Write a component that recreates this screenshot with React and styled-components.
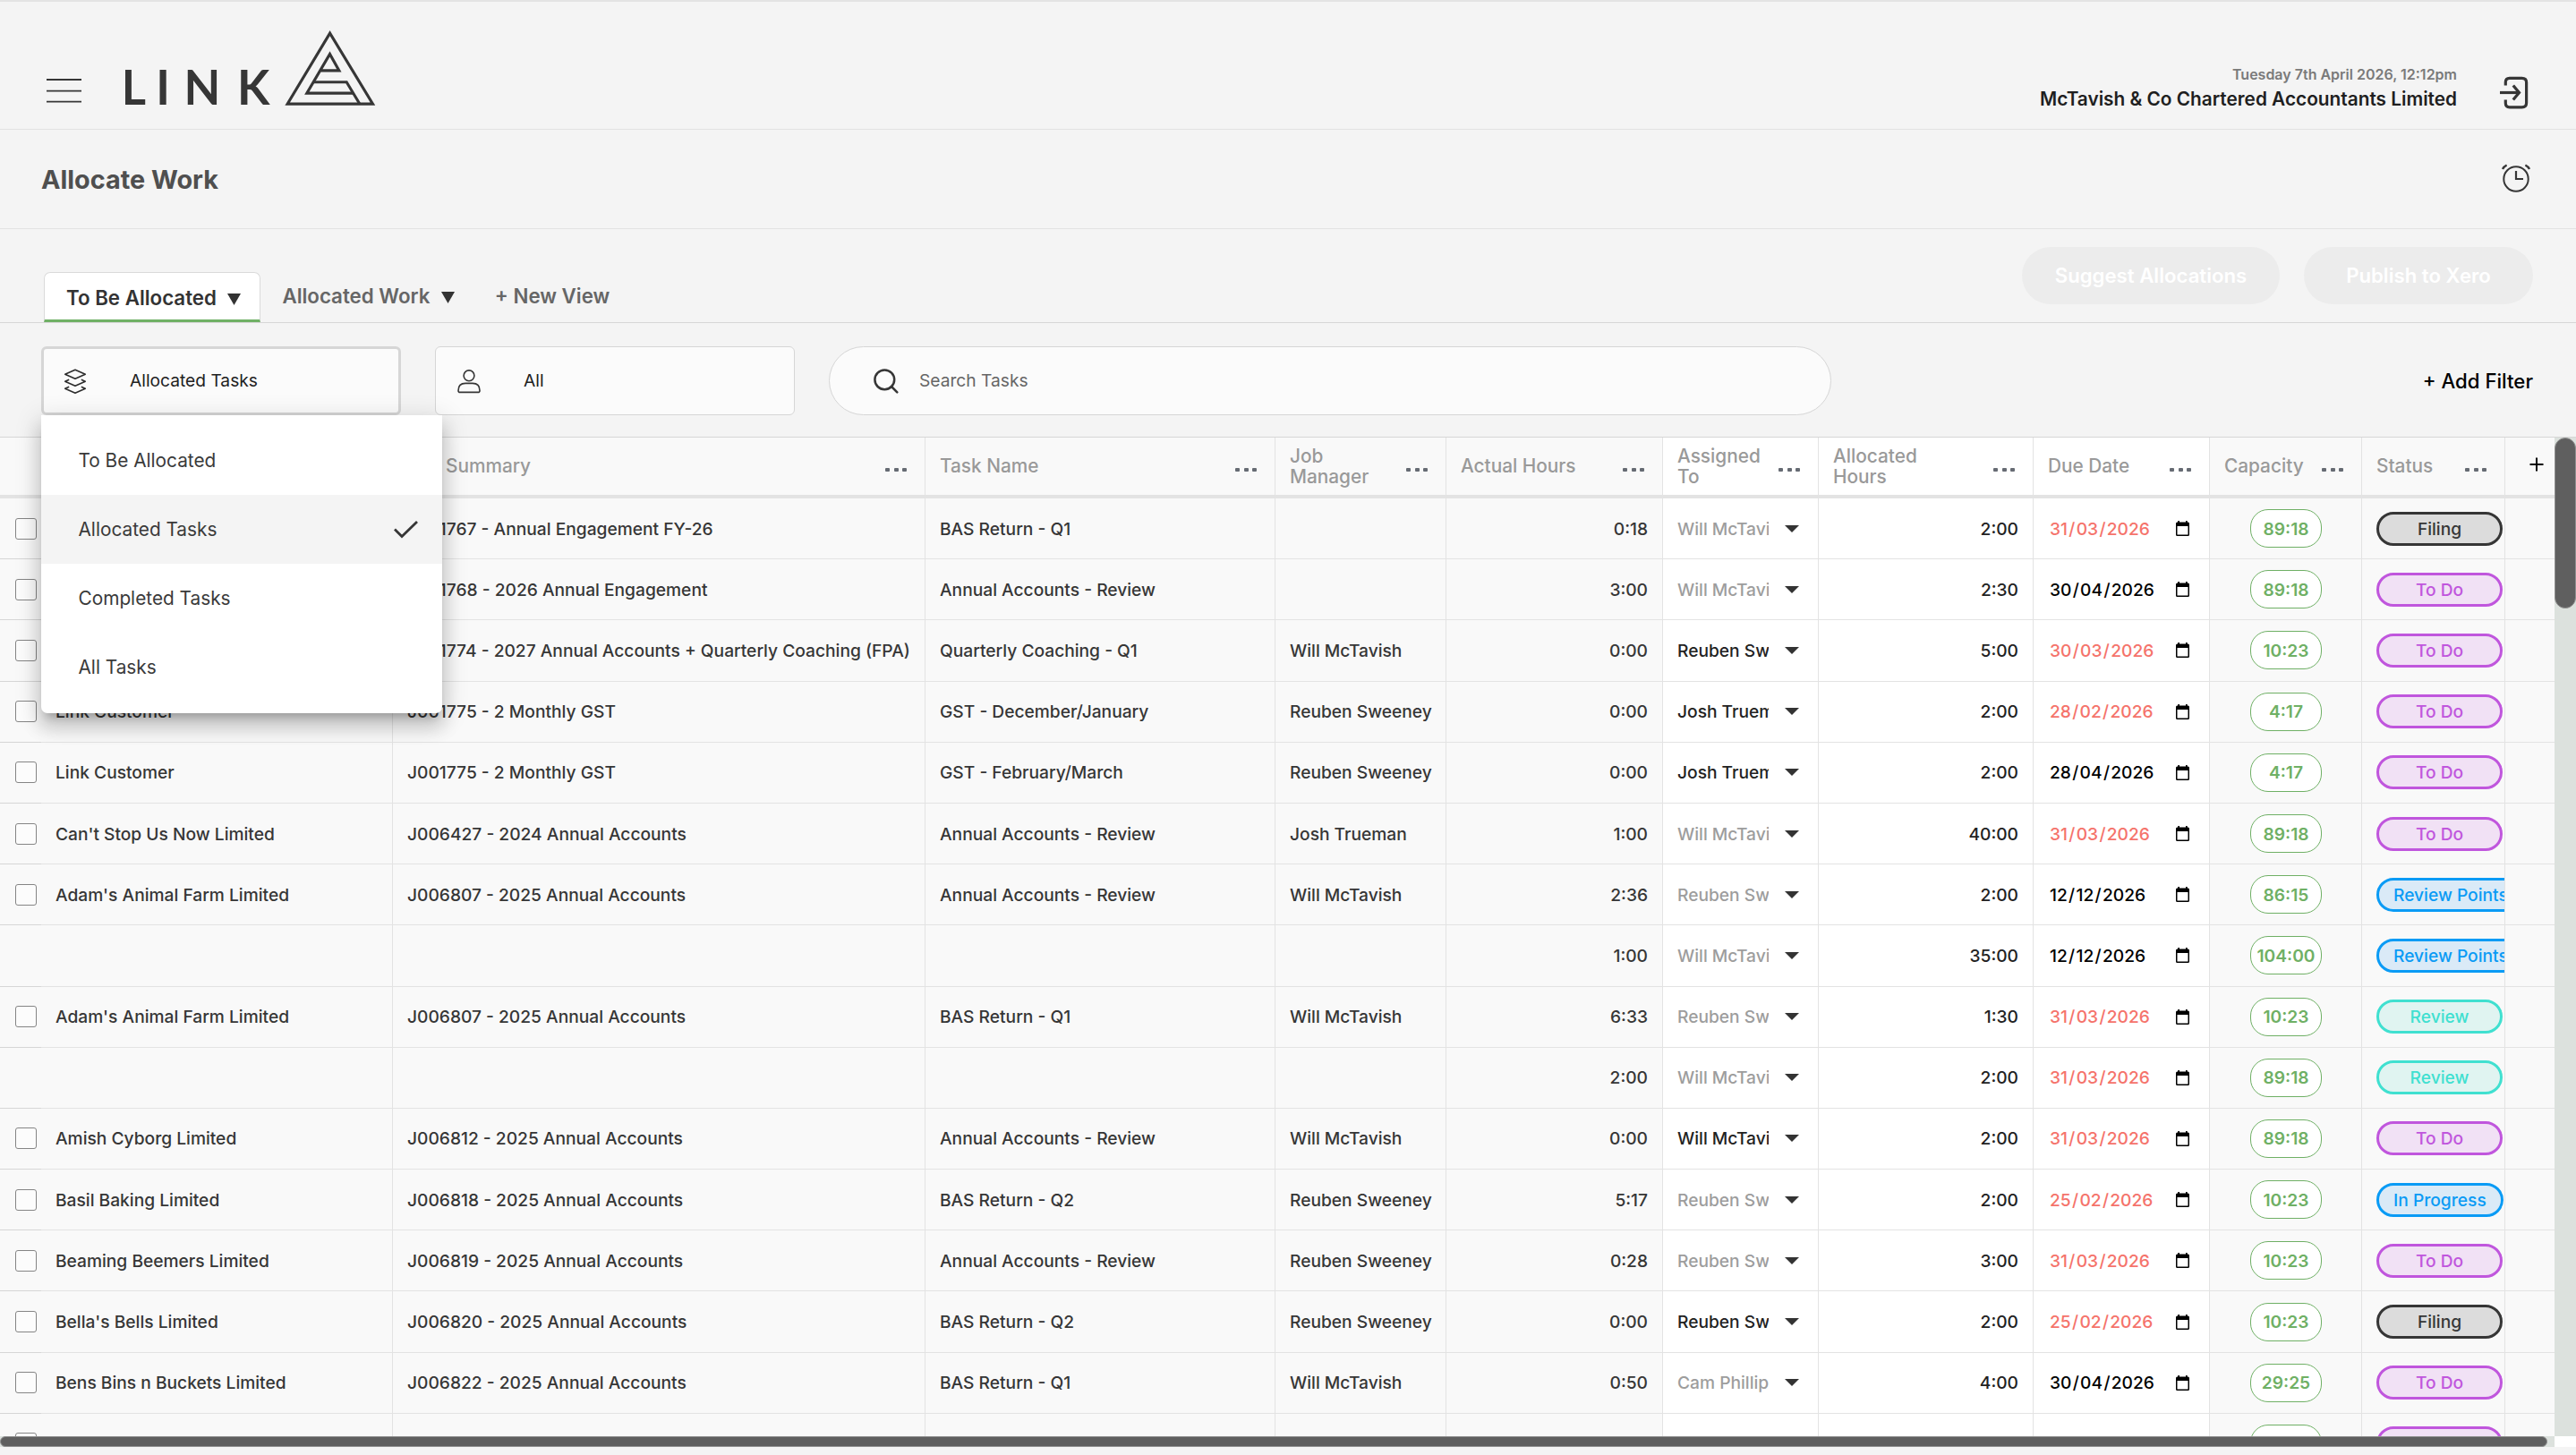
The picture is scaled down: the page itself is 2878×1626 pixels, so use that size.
import React from 'react';
import styled, { createGlobalStyle } from 'styled-components';

const columns = '46px 393px 595px 391px 191px 242px 174px 240px 197px 170px 160px 55px';

const statuses = {
    'Filing': { color: '#363636', fill: '#dcdcdc' },
    'To Do': { color: '#c056dd', fill: '#f1e1f5' },
    'Review Points': { color: '#0a9bf5', fill: '#daeaf7' },
    'In Progress': { color: '#0a9bf5', fill: '#daeaf7' },
    'Review': { color: '#40e0d0', fill: '#e0f4f1' },
}

const headings = [
    { title: '', menu: false },
    { title: '', menu: false },
    { title: 'Summary', menu: true, indent: 43 },
    { title: 'Task Name', menu: true },
    { title: 'Job Manager', menu: true, wrap: true },
    { title: 'Actual Hours', menu: true },
    { title: 'Assigned To', menu: true, wrap: true, editable: true },
    { title: 'Allocated Hours', menu: true, wrap: true, editable: true },
    { title: 'Due Date', menu: true, editable: true },
    { title: 'Capacity', menu: true },
    { title: 'Status', menu: true },
]

const tasks = [
    { id: 1, client: 'Link Customer', summary: 'J001767 - Annual Engagement FY-26', name: 'BAS Return - Q1', manager: '', actual: '0:18', assigned: 'Will McTavish', muted: true, hours: '2:00', due: '31/03/2026', late: true, capacity: '89:18', status: 'Filing' },
    { id: 2, client: 'Link Customer', summary: 'J001768 - 2026 Annual Engagement', name: 'Annual Accounts - Review', manager: '', actual: '3:00', assigned: 'Will McTavish', muted: true, hours: '2:30', due: '30/04/2026', late: false, capacity: '89:18', status: 'To Do' },
    { id: 3, client: 'Link Customer', summary: 'J001774 - 2027 Annual Accounts + Quarterly Coaching (FPA)', name: 'Quarterly Coaching - Q1', manager: 'Will McTavish', actual: '0:00', assigned: 'Reuben Sweeney', muted: false, hours: '5:00', due: '30/03/2026', late: true, capacity: '10:23', status: 'To Do' },
    { id: 4, client: 'Link Customer', summary: 'J001775 - 2 Monthly GST', name: 'GST - December/January', manager: 'Reuben Sweeney', actual: '0:00', assigned: 'Josh Trueman', muted: false, hours: '2:00', due: '28/02/2026', late: true, capacity: '4:17', status: 'To Do' },
    { id: 5, client: 'Link Customer', summary: 'J001775 - 2 Monthly GST', name: 'GST - February/March', manager: 'Reuben Sweeney', actual: '0:00', assigned: 'Josh Trueman', muted: false, hours: '2:00', due: '28/04/2026', late: false, capacity: '4:17', status: 'To Do' },
    { id: 6, client: "Can't Stop Us Now Limited", summary: 'J006427 - 2024 Annual Accounts', name: 'Annual Accounts - Review', manager: 'Josh Trueman', actual: '1:00', assigned: 'Will McTavish', muted: true, hours: '40:00', due: '31/03/2026', late: true, capacity: '89:18', status: 'To Do' },
    { id: 7, client: "Adam's Animal Farm Limited", summary: 'J006807 - 2025 Annual Accounts', name: 'Annual Accounts - Review', manager: 'Will McTavish', actual: '2:36', assigned: 'Reuben Sweeney', muted: true, hours: '2:00', due: '12/12/2026', late: false, capacity: '86:15', status: 'Review Points' },
    { id: 8, client: '', summary: '', name: '', manager: '', actual: '1:00', assigned: 'Will McTavish', muted: true, hours: '35:00', due: '12/12/2026', late: false, capacity: '104:00', status: 'Review Points' },
    { id: 9, client: "Adam's Animal Farm Limited", summary: 'J006807 - 2025 Annual Accounts', name: 'BAS Return - Q1', manager: 'Will McTavish', actual: '6:33', assigned: 'Reuben Sweeney', muted: true, hours: '1:30', due: '31/03/2026', late: true, capacity: '10:23', status: 'Review' },
    { id: 10, client: '', summary: '', name: '', manager: '', actual: '2:00', assigned: 'Will McTavish', muted: true, hours: '2:00', due: '31/03/2026', late: true, capacity: '89:18', status: 'Review' },
    { id: 11, client: 'Amish Cyborg Limited', summary: 'J006812 - 2025 Annual Accounts', name: 'Annual Accounts - Review', manager: 'Will McTavish', actual: '0:00', assigned: 'Will McTavish', muted: false, hours: '2:00', due: '31/03/2026', late: true, capacity: '89:18', status: 'To Do' },
    { id: 12, client: 'Basil Baking Limited', summary: 'J006818 - 2025 Annual Accounts', name: 'BAS Return - Q2', manager: 'Reuben Sweeney', actual: '5:17', assigned: 'Reuben Sweeney', muted: true, hours: '2:00', due: '25/02/2026', late: true, capacity: '10:23', status: 'In Progress' },
    { id: 13, client: 'Beaming Beemers Limited', summary: 'J006819 - 2025 Annual Accounts', name: 'Annual Accounts - Review', manager: 'Reuben Sweeney', actual: '0:28', assigned: 'Reuben Sweeney', muted: true, hours: '3:00', due: '31/03/2026', late: true, capacity: '10:23', status: 'To Do' },
    { id: 14, client: "Bella's Bells Limited", summary: 'J006820 - 2025 Annual Accounts', name: 'BAS Return - Q2', manager: 'Reuben Sweeney', actual: '0:00', assigned: 'Reuben Sweeney', muted: false, hours: '2:00', due: '25/02/2026', late: true, capacity: '10:23', status: 'Filing' },
    { id: 15, client: 'Bens Bins n Buckets Limited', summary: 'J006822 - 2025 Annual Accounts', name: 'BAS Return - Q1', manager: 'Will McTavish', actual: '0:50', assigned: 'Cam Phillips', muted: true, hours: '4:00', due: '30/04/2026', late: false, capacity: '29:25', status: 'To Do' },
]

const options = ['To Be Allocated', 'Allocated Tasks', 'Completed Tasks', 'All Tasks']

export default function App() {
    return (
        <Page>
            <GlobalStyle />
            <Header>
                <Brand>
                    <MenuIcon />
                    <Logo />
                </Brand>
                <Account>
                    <div>
                        <Today>Tuesday 7th April 2026, 12:12pm</Today>
                        <Company>McTavish &amp; Co Chartered Accountants Limited</Company>
                    </div>
                    <ExitIcon />
                </Account>
            </Header>
            <TitleBar>
                <Title>Allocate Work</Title>
                <ClockIcon />
            </TitleBar>
            <TabBar>
                <Tabs>
                    <Tab $active>To Be Allocated<TabArrow /></Tab>
                    <Tab>Allocated Work<TabArrow /></Tab>
                    <Tab>+ New View</Tab>
                </Tabs>
                <Actions>
                    <ActionButton $width={288}>Suggest Allocations</ActionButton>
                    <ActionButton $width={256}>Publish to Xero</ActionButton>
                </Actions>
            </TabBar>
            <Filters>
                <Select $open>
                    <LayersIcon />
                    <FieldText>Allocated Tasks</FieldText>
                    <Menu>
                        {options.map(option => (
                            <Option key={option} $selected={option === 'Allocated Tasks'}>
                                {option}
                                {option === 'Allocated Tasks' && <CheckIcon />}
                            </Option>
                        ))}
                    </Menu>
                </Select>
                <Select>
                    <PersonIcon />
                    <FieldText>All</FieldText>
                </Select>
                <Search>
                    <SearchIcon />
                    <FieldText>Search Tasks</FieldText>
                </Search>
                <AddFilter>+ Add Filter</AddFilter>
            </Filters>
            <TableArea>
                <Table>
                    <HeadRow>
                        {headings.map((heading, i) => (
                            <HeadCell key={i} $editable={heading.editable} $indent={heading.indent} $plain={i === 0}>
                                <HeadTitle $wrap={heading.wrap}>{heading.title}</HeadTitle>
                                {heading.menu && <Dots><i /><i /><i /></Dots>}
                            </HeadCell>
                        ))}
                        <AddColumn><PlusIcon /></AddColumn>
                    </HeadRow>
                    {tasks.map(task => <TaskRow key={task.id} task={task} />)}
                    <Row>
                        <CheckCell><Checkbox /></CheckCell>
                        <Cell /><Cell /><Cell /><Cell /><Cell />
                        <Cell $editable />
                        <Cell $editable />
                        <DateCell $late><span /><CalendarIcon /></DateCell>
                        <CapacityCell><Capacity /></CapacityCell>
                        <StatusCell><Status $color="#c056dd" $fill="#f1e1f5" /></StatusCell>
                        <LastCell />
                    </Row>
                </Table>
                <VerticalTrack><VerticalThumb /></VerticalTrack>
            </TableArea>
            <HorizontalTrack>
                <HorizontalThumb />
                <Corner />
            </HorizontalTrack>
        </Page>
    )
}

function TaskRow({ task }) {
    const [day, month, year] = task.due.split('/')
    const status = statuses[task.status]
    return (
        <Row>
            <CheckCell>{task.client && <Checkbox />}</CheckCell>
            <Cell>{task.client}</Cell>
            <Cell>{task.summary}</Cell>
            <Cell>{task.name}</Cell>
            <Cell>{task.manager}</Cell>
            <Cell $right>{task.actual}</Cell>
            <AssignedCell $muted={task.muted}>
                <span>{task.assigned}</span>
                <Caret />
            </AssignedCell>
            <Cell $editable $right>{task.hours}</Cell>
            <DateCell $late={task.late}>
                <span>{day}<b>/</b>{month}<b>/</b>{year}</span>
                <CalendarIcon />
            </DateCell>
            <CapacityCell><Capacity>{task.capacity}</Capacity></CapacityCell>
            <StatusCell><Status $color={status.color} $fill={status.fill}>{task.status}</Status></StatusCell>
            <LastCell />
        </Row>
    )
}

const MenuIcon = () => (
    <svg width="39" height="28" viewBox="0 0 39 28" fill="none" stroke="#363636" strokeWidth="1.9">
        <path d="M0 2H39M0 14.6H39M0 26.6H39" />
    </svg>
)

const Logo = () => (
    <svg width="282" height="90" viewBox="0 0 282 90">
        <LogoText x="-4.6 34.2 65.4 125" y="83.3">LINK</LogoText>
        <g fill="none" stroke="#363636" strokeWidth="3.1">
            <path d="M228.6 3.1L276.5 82.1H181.1Z" />
            <path d="M218 44.9H238.9L228.5 26.4L202.8 70.1H254.5" />
            <path d="M210.5 57.7H247.2L261.8 82" />
        </g>
    </svg>
)

const ExitIcon = () => (
    <svg width="32" height="37" viewBox="0 0 32 37" fill="none" stroke="#363636" strokeWidth="3.2">
        <path d="M6.3 10.5V6.8Q6.3 2.3 10.8 2.3H24.5Q29.6 2.3 29.6 7V30Q29.6 34.8 24.5 34.8H10.8Q6.3 34.8 6.3 30.3V26.5" />
        <path d="M0 18.5H22" />
        <path d="M14.8 10.5L21.5 18.5L14.8 26.5" />
    </svg>
)

const ClockIcon = () => (
    <svg width="32" height="34" viewBox="0 0 32 34" fill="none" stroke="#363636" strokeWidth="2">
        <circle cx="16" cy="17" r="13.7" />
        <path d="M16 8V17H24" strokeWidth="2.2" />
        <path d="M1 6Q2.5 3 5.6 1.5M31 6Q29.5 3 26.4 1.5" strokeWidth="2.4" />
    </svg>
)

const LayersIcon = () => (
    <svg width="26" height="28" viewBox="0 0 26 28" fill="none" stroke="#2c2c2c" strokeWidth="1.5" strokeLinejoin="round">
        <path d="M13 1.3L24.3 6.3L13 11.3L1.7 6.3Z" />
        <path d="M6.2 12.3L1.7 14.3L13 19.3L24.3 14.3L19.8 12.3" />
        <path d="M6.2 20.3L1.7 22.3L13 27.2L24.3 22.3L19.8 20.3" />
    </svg>
)

const PersonIcon = () => (
    <svg width="26" height="28" viewBox="0 0 26 28" fill="none" stroke="#363636" strokeWidth="1.6">
        <circle cx="13" cy="7.8" r="5.9" />
        <path d="M1 24.4C1 18.8 4.6 16.4 9 16.4H17C21.4 16.4 25 18.8 25 24.4Q25 26.4 23 26.4H3Q1 26.4 1 24.4Z" />
    </svg>
)

const SearchIcon = () => (
    <svg width="28" height="28" viewBox="0 0 28 28" fill="none" stroke="#363636" strokeWidth="2.5" strokeLinecap="round">
        <circle cx="12.3" cy="12.3" r="10.9" />
        <path d="M20 20L26.3 26.3" />
    </svg>
)

const CheckIcon = () => (
    <svg width="27" height="20" viewBox="0 0 27 20" fill="none" stroke="#363636" strokeWidth="2.8">
        <path d="M1 9.5L9 17.5L26 1" />
    </svg>
)

const PlusIcon = () => (
    <svg width="16" height="16" viewBox="0 0 16 16" stroke="#000" strokeWidth="2">
        <path d="M8 0.5V15.5M0.5 8H15.5" />
    </svg>
)

const CalendarIcon = () => (
    <svg width="15" height="17" viewBox="0 0 15 17" fill="#000">
        <path fillRule="evenodd" d="M2.3 0H4V1.6H11V0H12.7V1.6H13.5Q15 1.6 15 3.1V15.5Q15 17 13.5 17H1.5Q0 17 0 15.5V3.1Q0 1.6 1.5 1.6H2.3ZM1.5 6V15.5H13.5V6Z" />
    </svg>
)

const Caret = () => (
    <svg width="16" height="8" viewBox="0 0 16 8" fill="#333"><path d="M0 0H16L8 8Z" /></svg>
)

const TabArrow = () => (
    <svg width="15" height="13" viewBox="0 0 15 13" fill="#333"><path d="M0 0H15L7.5 13Z" /></svg>
)

const GlobalStyle = createGlobalStyle`
    * {
        box-sizing: border-box;
    }
    body {
        margin: 0;
        background: #f4f4f4;
        font-family: Inter, sans-serif;
        color: #333;
    }
    svg {
        flex: none;
        display: block;
    }
`

const Page = styled.div`
    width: 2878px;
    height: 1626px;
    overflow: hidden;
    display: flex;
    flex-direction: column;
    background: #f4f4f4;
    border-top: 2px solid #e3e3e3;
`

const Header = styled.header`
    height: 143px;
    flex: none;
    display: flex;
    justify-content: space-between;
    border-bottom: 1px solid #e2e2e2;
`

const Brand = styled.div`
    display: flex;
    align-items: flex-start;
    gap: 49px;
    padding: 32px 0 0 52px;
    > svg:first-child {
        margin-top: 53px;
    }
`

const LogoText = styled.text`
    font-family: Lato, sans-serif;
    font-size: 53px;
    font-weight: 700;
    fill: #363636;
`

const Account = styled.div`
    display: flex;
    align-items: flex-start;
    gap: 48px;
    padding: 71px 53px 0 0;
    text-align: right;
    > svg {
        margin-top: 12px;
    }
`

const Today = styled.div`
    font-size: 16px;
    line-height: 20px;
    font-weight: 600;
    color: #7a7a7a;
`

const Company = styled.div`
    margin-top: 5px;
    font-size: 20.8px;
    line-height: 26px;
    font-weight: 600;
    color: #1f1f1f;
`

const TitleBar = styled.div`
    height: 111px;
    flex: none;
    display: flex;
    align-items: center;
    justify-content: space-between;
    padding: 0 51px 0 46px;
    border-bottom: 1px solid #e2e2e2;
`

const Title = styled.h1`
    margin: 0;
    font-size: 28.8px;
    font-weight: 700;
    color: #4f4f4f;
`

const TabBar = styled.div`
    height: 105px;
    flex: none;
    display: flex;
    justify-content: space-between;
    padding: 0 48px 0 49px;
    border-bottom: 1px solid #d6d6d6;
`

const Tabs = styled.div`
    display: flex;
    align-items: flex-end;
`

const Tab = styled.div`
    height: 56px;
    display: flex;
    align-items: center;
    gap: 12.5px;
    padding: ${(props) => (props.$active ? '2px 21px 0 24px' : '0 20px 1px 23px')};
    font-size: 22.3px;
    font-weight: 600;
    white-space: nowrap;
    color: ${(props) => (props.$active ? '#333' : '#666')};
    background: ${(props) => (props.$active ? '#fff' : 'transparent')};
    border: 1px solid ${(props) => (props.$active ? '#dadada' : 'transparent')};
    border-bottom: 3px solid ${(props) => (props.$active ? '#6fb065' : 'transparent')};
    border-radius: 7px 7px 0 0;
    svg {
        margin-top: 4px;
    }
`

const Actions = styled.div`
    display: flex;
    gap: 27px;
    padding-top: 20px;
`

const ActionButton = styled.button`
    width: ${(props) => props.$width}px;
    height: 64px;
    padding: 0 0 1px;
    border: none;
    border-radius: 32px;
    background: #ececec;
    color: #fff;
    font: 600 22.2px Inter, sans-serif;
`

const Filters = styled.div`
    height: 127px;
    flex: none;
    display: flex;
    align-items: flex-start;
    padding: 26px 48px 0 46px;
`

const Select = styled.div`
    width: 402px;
    height: 77px;
    margin-right: 38px;
    display: flex;
    align-items: center;
    gap: 48px;
    padding-left: ${(props) => (props.$open ? 22 : 24)}px;
    position: relative;
    background: #fbfbfb;
    border: ${(props) => (props.$open ? 3 : 1)}px solid #d6d6d6;
    border-radius: 6px;
    font-size: 19.2px;
    color: #222;
`

const FieldText = styled.span`
    padding-bottom: 2px;
`

const Menu = styled.div`
    width: 448px;
    padding: 12px 0 13px;
    position: absolute;
    top: 74px;
    left: -3px;
    z-index: 2;
    background: #fff;
    border-radius: 0 0 7px 7px;
    box-shadow: 0 10px 10px -6px rgba(0, 0, 0, 0.2), 0 16px 20px 2px rgba(0, 0, 0, 0.14), 0 6px 28px 4px rgba(0, 0, 0, 0.12);
`

const Option = styled.div`
    height: 77px;
    display: flex;
    align-items: center;
    justify-content: space-between;
    padding: 0 27px 0 41.5px;
    font-size: 20.8px;
    color: #3a3a3a;
    background: ${(props) => (props.$selected ? '#f4f4f4' : '#fff')};
`

const Search = styled.div`
    width: 1120px;
    height: 77px;
    display: flex;
    align-items: center;
    gap: 23px;
    padding-left: 49px;
    background: #fbfbfb;
    border: 1px solid #d6d6d6;
    border-radius: 39px;
    font-size: 19.2px;
    color: #666;
`

const AddFilter = styled.div`
    height: 77px;
    margin-left: auto;
    display: flex;
    align-items: center;
    font-size: 22.2px;
    font-weight: 500;
    color: #000;
`

const TableArea = styled.div`
    height: 1117px;
    flex: none;
    display: flex;
    overflow: hidden;
    border-top: 1px solid #d6d6d6;
`

const Table = styled.div`
    width: 2854px;
    flex: none;
`

const HeadRow = styled.div`
    height: 68px;
    display: grid;
    grid-template-columns: ${columns};
    border-bottom: 4px solid #e3e3e3;
    background: #f9f9f9;
`

const HeadCell = styled.div`
    display: flex;
    align-items: center;
    justify-content: space-between;
    padding: 0 20px 0 ${(props) => 16 + (props.$indent || 0)}px;
    background: ${(props) => (props.$editable ? '#fff' : '#f9f9f9')};
    border-right: ${(props) => (props.$plain ? 'none' : '1px solid #e3e3e3')};
`

const HeadTitle = styled.span`
    width: ${(props) => (props.$wrap ? 'min-content' : 'auto')};
    padding-bottom: ${(props) => (props.$wrap ? 0 : 2)}px;
    font-size: 20.8px;
    line-height: 23px;
    font-weight: 500;
    color: #999;
`

const Dots = styled.span`
    display: flex;
    gap: 4.5px;
    margin-top: 8px;
    i {
        width: 5px;
        height: 4px;
        border-radius: 1px;
        background: #666b73;
    }
`

const AddColumn = styled.div`
    padding: 22px 0 0 27px;
`

const Row = styled.div`
    height: 68.2px;
    display: grid;
    grid-template-columns: ${columns};
`

const Cell = styled.div`
    display: flex;
    align-items: center;
    justify-content: ${(props) => (props.$right ? 'flex-end' : 'flex-start')};
    padding: 0 16px;
    overflow: hidden;
    white-space: nowrap;
    font-size: 19.2px;
    font-weight: 500;
    color: ${(props) => (props.$editable ? '#222' : '#363636')};
    background: ${(props) => (props.$editable ? '#fff' : '#f9f9f9')};
    border-right: 1px solid #e3e3e3;
    border-bottom: 1px solid #e3e3e3;
`

const CheckCell = styled(Cell)`
    padding: 0 0 0 17px;
    border-right: none;
    border-bottom-color: #d6d6d6;
`

const Checkbox = styled.span`
    width: 24px;
    height: 24px;
    border: 1px solid #858585;
    border-radius: 3px;
    background: #fcfcfc;
`

const AssignedCell = styled(Cell)`
    justify-content: space-between;
    padding-right: 21px;
    background: #fff;
    color: ${(props) => (props.$muted ? '#9d9d9d' : '#222')};
    span {
        width: 102px;
        overflow: hidden;
    }
`

const DateCell = styled(Cell)`
    justify-content: space-between;
    padding: 0 22px 0 18px;
    background: #fff;
    color: ${(props) => (props.$late ? '#f5736b' : '#000')};
    b {
        padding: 0 1.3px;
        font-weight: 500;
    }
`

const CapacityCell = styled(Cell)`
    justify-content: center;
    padding: 0;
`

const Capacity = styled.span`
    width: 80px;
    height: 43px;
    display: flex;
    align-items: center;
    justify-content: center;
    margin-right: -1px;
    border: 1px solid #6fb065;
    border-radius: 20px;
    background: #fff;
    color: #6fb065;
    font-weight: 600;
`

const StatusCell = styled(Cell)`
    padding: 0 0 0 16px;
`

const Status = styled.span`
    min-width: 141px;
    height: 38px;
    flex: none;
    display: flex;
    align-items: center;
    justify-content: center;
    padding: 0 16px;
    border: 3px solid ${(props) => props.$color};
    border-radius: 19px;
    background: ${(props) => props.$fill};
    color: ${(props) => props.$color};
`

const LastCell = styled(Cell)`
    border-right: none;
`

const VerticalTrack = styled.div`
    flex: 1;
    background: #dce1dd;
`

const VerticalThumb = styled.div`
    height: 191px;
    border: 1px solid #8f8f8f;
    border-radius: 12px;
    background: #5f5f5f;
`

const HorizontalTrack = styled.div`
    height: 12px;
    flex: none;
    display: flex;
    background: #dce1dd;
`

const HorizontalThumb = styled.div`
    width: 2846px;
    border: 1px solid #8f8f8f;
    border-radius: 6px;
    background: #5f5f5f;
`

const Corner = styled.div`
    width: 24px;
    margin-left: auto;
    background: #fff;
`
